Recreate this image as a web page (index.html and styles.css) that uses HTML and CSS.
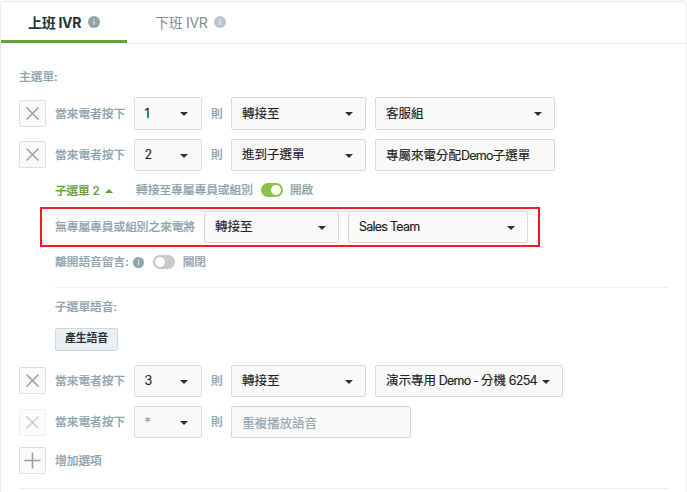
FILE: index.html
```html
<!DOCTYPE html>
<html lang="zh-Hant">
<head>
    <meta charset="UTF-8">
    <meta name="viewport" content="width=device-width, initial-scale=1.0">
    <title>IVR</title>
    <link rel="stylesheet" href="styles.css">
</head>
<body>
    <svg class="defs">
        <symbol id="info" viewBox="0 0 12 12">
            <circle cx="6" cy="6" r="6" fill="currentColor"/>
            <path d="M6 3v1.3M6 5.2v3.8" stroke="#fff" stroke-opacity="0.8" stroke-width="1.2" fill="none"/>
        </symbol>
        <symbol id="cross" viewBox="0 0 25 25">
            <path d="M6.5 6.5l12 12M18.5 6.5l-12 12" stroke="currentColor" stroke-width="1.5" fill="none"/>
        </symbol>
        <symbol id="plus" viewBox="0 0 25 25">
            <path d="M12.5 4.5v16M4.5 12.5h16" stroke="currentColor" stroke-width="1.6" fill="none"/>
        </symbol>
    </svg>

    <div class="card">
        <div class="tabs">
            <div class="tab active">上班 IVR<svg class="info"><use href="#info"/></svg></div>
            <div class="tab">下班 IVR<svg class="info"><use href="#info"/></svg></div>
        </div>

        <div class="content">
            <div class="title">主選單:</div>

            <div class="row first">
                <button class="icon-btn"><svg><use href="#cross"/></svg></button>
                <span class="label">當來電者按下</span>
                <div class="select key">1</div>
                <span class="then">則</span>
                <div class="select action">轉接至</div>
                <div class="select target">客服組</div>
            </div>

            <div class="row">
                <button class="icon-btn"><svg><use href="#cross"/></svg></button>
                <span class="label">當來電者按下</span>
                <div class="select key">2</div>
                <span class="then">則</span>
                <div class="select action">進到子選單</div>
                <div class="field"><span>專屬來電分配<span class="en">Demo</span>子選單</span></div>
            </div>

            <div class="submenu">
                <div class="sub-head">
                    <span class="sub-name">子選單 2</span>
                    <span class="sub-transfer">轉接至專屬專員或組別</span>
                    <span class="switch on"></span>
                    <span>開啟</span>
                </div>
                <div class="highlight">
                    <span class="fallback">無專屬專員或組別之來電將</span>
                    <div class="select action">轉接至</div>
                    <div class="select target"><span class="en">Sales Team</span></div>
                </div>
                <div class="voicemail">
                    <span>離開語音留言:</span>
                    <svg class="info"><use href="#info"/></svg>
                    <span class="switch"></span>
                    <span>關閉</span>
                </div>
                <div class="voice">
                    <div class="voice-title">子選單語音:</div>
                    <button class="voice-btn">產生語音</button>
                </div>
            </div>

            <div class="row">
                <button class="icon-btn"><svg><use href="#cross"/></svg></button>
                <span class="label">當來電者按下</span>
                <div class="select key">3</div>
                <span class="then">則</span>
                <div class="select action">轉接至</div>
                <div class="select target wide"><span>演示專用<span class="en"> Demo - </span>分機<span class="en"> 6254</span></span></div>
            </div>

            <div class="row">
                <button class="icon-btn disabled"><svg><use href="#cross"/></svg></button>
                <span class="label">當來電者按下</span>
                <div class="select key muted">*</div>
                <span class="then">則</span>
                <div class="field muted">重複播放語音</div>
            </div>

            <div class="row add">
                <button class="icon-btn"><svg><use href="#plus"/></svg></button>
                <span class="label">增加選項</span>
            </div>
        </div>
    </div>
</body>
</html>
```

FILE: styles.css
```css
* {
    box-sizing: border-box;
}
body {
    margin: 0;
    padding-top: 1px;
    height: 492px;
    overflow: hidden;
    background: #f9f9f9;
    color: #90a4ae;
    font-family: Inter, 'Noto Sans CJK TC', sans-serif;
    font-size: 11.7px;
    font-weight: 500;
    line-height: 16px;
    white-space: nowrap;
}
.defs {
    display: none;
}
.card {
    height: 500px;
    background: #fff;
    border: 1px solid #ececec;
    border-radius: 3px;
}
.tabs {
    display: flex;
    height: 42px;
    border-bottom: 1px solid #eee;
}
.tab {
    display: flex;
    align-items: center;
    width: 126px;
    height: 41px;
    padding-left: 28px;
    font-size: 14px;
    letter-spacing: -0.3px;
    font-weight: 400;
    color: #888e90;
}
.tab.active {
    padding: 3px 0 0 27px;
    border-bottom: 3px solid #689f38;
    color: #263238;
    font-weight: 700;
}
.info {
    width: 12px;
    height: 12px;
    margin: -1px 0 0 7px;
    color: #90a4ae;
}
.tab:not(.active) .info {
    margin-left: 6px;
    color: #b8c6cd;
}
.content {
    margin: 0 17px 0 18px;
    height: 445px;
    border-bottom: 1px solid #eee;
}
.title {
    padding-top: 25px;
    height: 53px;
}
.title,
.label,
.then,
.sub-head,
.fallback,
.voicemail,
.voice-title {
    -webkit-text-stroke: 0.2px currentColor;
}
.row {
    display: flex;
    align-items: center;
    gap: 9px;
    height: 32px;
    margin-bottom: 9px;
}
.row.first {
    height: 33px;
}
.row .label {
    width: 70px;
}
.row .then {
    width: 11px;
}
.icon-btn {
    flex: none;
    width: 27px;
    height: 27px;
    margin: 0 0 1px;
    padding: 0;
    background: #fafafa;
    border: 1px solid #d9e0e3;
    border-radius: 2px;
    color: #90a4ae;
}
.first .icon-btn,
.add .icon-btn,
.icon-btn.disabled {
    margin: 0;
}
.icon-btn svg {
    display: block;
    width: 25px;
    height: 25px;
}
.icon-btn.disabled {
    opacity: 0.5;
}
.select,
.field {
    display: flex;
    align-items: center;
    justify-content: space-between;
    flex: none;
    height: 100%;
    padding: 0 12px 0 10px;
    background: #fafafa;
    border: 1px solid #d5dde1;
    border-radius: 2px;
    color: #212121;
    font-size: 12.5px;
    font-weight: 400;
    -webkit-text-stroke: 0.15px currentColor;
}
.select::after {
    content: "";
    margin-top: 2px;
    border: 4px solid transparent;
    border-top-color: #263238;
    border-bottom: 0;
}
.first .select::after,
.select.muted::after {
    margin-top: 0;
}
.en {
    letter-spacing: -0.75px;
    white-space: pre;
}
.key {
    width: 68px;
    padding: 0 13px 0 9.5px;
}
.action {
    width: 135px;
}
.target,
.field {
    width: 180px;
}
.target.wide {
    width: 188px;
}
.field {
    border-color: #d8d8d8;
    padding-top: 2px;
}
.muted {
    padding-top: 3px;
    color: #90a4ae;
}
.select.muted {
    padding-top: 1px;
}
.submenu {
    padding-left: 36px;
    height: 185px;
}
.sub-head,
.voicemail {
    display: flex;
    align-items: center;
    height: 20px;
}
.sub-name {
    display: flex;
    align-items: center;
    width: 81px;
    padding-top: 1px;
    letter-spacing: -0.15px;
    color: #689f38;
}
.sub-name::after {
    content: "";
    margin-left: 5px;
    border: 4px solid transparent;
    border-bottom-color: #689f38;
    border-top: 0;
}
.switch {
    width: 22px;
    height: 14px;
    margin: 0 8px;
    padding: 2px;
    border-radius: 7px;
    background: #c9c9c9;
}
.switch::after {
    content: "";
    display: block;
    width: 10px;
    height: 10px;
    border-radius: 50%;
    background: #fff;
}
.switch.on {
    margin-right: 7px;
    background: #8bc34a;
}
.switch.on::after {
    margin-left: auto;
}
.highlight {
    display: flex;
    align-items: center;
    gap: 9px;
    width: 500px;
    height: 40px;
    margin: 7px 0 5px -15px;
    padding: 2px 0 2px 13px;
    border: 2px solid #ed1c24;
}
.fallback {
    width: 140px;
}
.voicemail .info {
    width: 11px;
    height: 11px;
    margin: 0 1px 0 4px;
}
.voice {
    margin-top: 15px;
    border-top: 1px solid #eee;
    padding-top: 11px;
}
.voice-title {
    margin-bottom: 13px;
}
.voice-btn {
    width: 63px;
    height: 23px;
    padding: 0 0 5px;
    background: #eceff1;
    border: 1px solid #cfd8dc;
    border-radius: 2px;
    color: #263238;
    font: 700 10.8px Inter, 'Noto Sans CJK TC', sans-serif;
}
.row.add {
    height: 27px;
}
```
